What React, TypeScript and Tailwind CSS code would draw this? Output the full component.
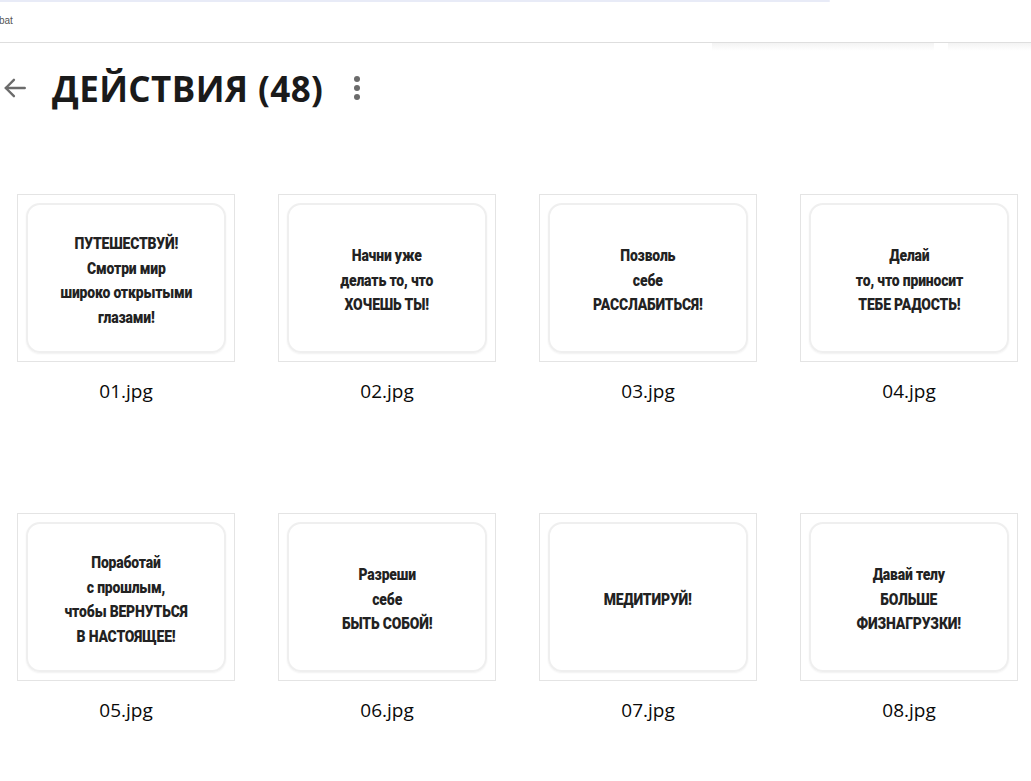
import React from "react";

const items = [
  { name: "01.jpg", lines: ["ПУТЕШЕСТВУЙ!", "Смотри мир", "широко открытыми", "глазами!"] },
  { name: "02.jpg", lines: ["Начни уже", "делать то, что", "ХОЧЕШЬ ТЫ!"] },
  { name: "03.jpg", lines: ["Позволь", "себе", "РАССЛАБИТЬСЯ!"] },
  { name: "04.jpg", lines: ["Делай", "то, что приносит", "ТЕБЕ РАДОСТЬ!"] },
  { name: "05.jpg", lines: ["Поработай", "с прошлым,", "чтобы ВЕРНУТЬСЯ", "В НАСТОЯЩЕЕ!"] },
  { name: "06.jpg", lines: ["Разреши", "себе", "БЫТЬ СОБОЙ!"] },
  { name: "07.jpg", lines: ["МЕДИТИРУЙ!"] },
  { name: "08.jpg", lines: ["Давай телу", "БОЛЬШЕ", "ФИЗНАГРУЗКИ!"] },
];

function Thumb({ lines }: { lines: string[] }) {
  return (
    <div className="w-[218px] h-[168px] border border-[#e4e4e4] bg-white p-[8px]">
      <div className="w-full h-full rounded-[14px] border-2 border-[#efefef] shadow-[0_1px_2px_rgba(0,0,0,0.06)] flex flex-col items-center justify-center pt-[4px]">
        <div className="flex flex-col items-center scale-x-[0.82] font-['Roboto',sans-serif] font-black text-[17px] leading-[24.5px] tracking-[-0.2px] text-[#222] whitespace-nowrap">
          {lines.map((l) => (
            <div key={l}>{l}</div>
          ))}
        </div>
      </div>
    </div>
  );
}

export default function App() {
  return (
    <div className="w-[1031px] h-[781px] bg-white overflow-hidden font-['Open_Sans',sans-serif]">
      <div className="relative h-[43px] border-b border-[#dedede]">
        <div className="absolute left-0 top-0 w-[830px] h-[2px] rounded-r-full bg-[#e8ebf7]" />
        <div className="pt-[14px] text-[10px] leading-[14px] text-[#555] font-['Liberation_Sans',sans-serif] -ml-[1px]">bat</div>
        <div className="absolute left-[712px] top-[43px] w-[222px] h-[8px] bg-gradient-to-b from-[#f3f3f3] to-white" />
        <div className="absolute left-[948px] top-[43px] w-[83px] h-[8px] bg-gradient-to-b from-[#f3f3f3] to-white" />
      </div>

      <div className="flex items-center h-[92px] pl-[2px] pb-[2px]">
        <svg width="26" height="26" viewBox="0 0 24 24" fill="none" stroke="#6b6b6b" strokeWidth="2.2" strokeLinecap="round" strokeLinejoin="round">
          <path d="M21 12H3.5" />
          <path d="M11 4.5 3.5 12l7.5 7.5" />
        </svg>
        <h1 className="ml-[24px] text-[35px] font-bold text-[#1a1a1a] tracking-[0.4px] leading-none">ДЕЙСТВИЯ (48)</h1>
        <svg className="ml-[30px]" width="8" height="26" viewBox="0 0 8 26" fill="#6b6b6b">
          <circle cx="4" cy="4" r="3" />
          <circle cx="4" cy="13" r="3" />
          <circle cx="4" cy="22" r="3" />
        </svg>
      </div>

      <div className="grid grid-cols-[repeat(4,218px)] gap-x-[43px] gap-y-[109px] pl-[17px] pt-[59px]">
        {items.map((it) => (
          <div key={it.name} className="flex flex-col items-center">
            <Thumb lines={it.lines} />
            <div className="mt-[16px] text-[19px] leading-[26px] text-[#0a0a0a] font-['Open_Sans',sans-serif] font-normal">{it.name}</div>
          </div>
        ))}
      </div>
    </div>
  );
}
